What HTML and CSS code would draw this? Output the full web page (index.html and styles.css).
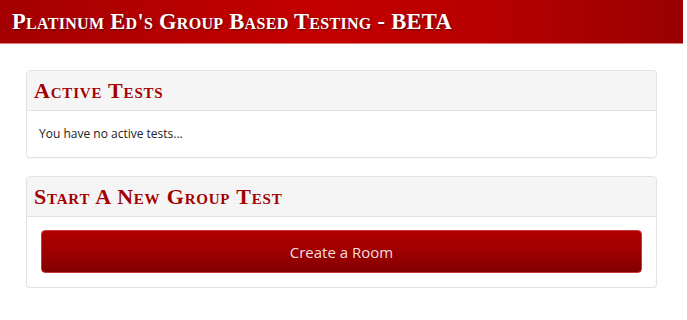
FILE: index.html
```html
<!DOCTYPE html>
<html lang="en">
<head>
    <meta charset="UTF-8">
    <title>Group Based Testing</title>
    <link rel="stylesheet" href="styles.css">
</head>
<body>
<div class="page">
    <header class="top-bar">
        <h1 class="brand">Platinum Ed's Group Based Testing - BETA</h1>
    </header>

    <main class="content">
        <section class="panel">
            <div class="panel-heading">
                <h2 class="panel-title">Active Tests</h2>
            </div>
            <div class="panel-body">
                <p class="empty-note">You have no active tests...</p>
            </div>
        </section>

        <section class="panel">
            <div class="panel-heading">
                <h2 class="panel-title">Start A New Group Test</h2>
            </div>
            <div class="panel-body panel-body-btn">
                <button class="btn-room" type="button">Create a Room</button>
            </div>
        </section>
    </main>
</div>
</body>
</html>
```

FILE: styles.css
```css
html, body {
    margin: 0;
    padding: 0;
    background: #fff;
}
.page {
    width: 683px;
    font-family: "Open Sans", "Liberation Sans", sans-serif;
}
.top-bar {
    height: 43px;
    border-bottom: 1px solid #e47a7a;
    background: linear-gradient(to right, #a40000 0%, #c40000 45%, #b80000 70%, #990000 100%);
    display: flex;
    align-items: center;
    padding: 0 12px;
}
.brand {
    margin: 0;
    font-family: "Liberation Serif", "DejaVu Serif", serif;
    font-variant: small-caps;
    font-weight: bold;
    font-size: 22.5px;
    letter-spacing: 0.3px;
    color: #fff;
    text-shadow: 1px 1px 2px rgba(60, 0, 0, 0.7);
    white-space: nowrap;
}
.content {
    padding: 26px 26px 0;
    display: flex;
    flex-direction: column;
    gap: 18px;
}
.panel {
    border: 1px solid #e2e2e2;
    border-radius: 4px;
    background: #fff;
    box-shadow: 0 1px 1px rgba(0, 0, 0, 0.05);
}
.panel-heading {
    background: #f5f5f5;
    border-bottom: 1px solid #e2e2e2;
    border-radius: 3px 3px 0 0;
    height: 39px;
    display: flex;
    align-items: center;
    padding: 0 7px;
}
.panel-title {
    margin: 0;
    font-family: "Liberation Serif", "DejaVu Serif", serif;
    font-variant: small-caps;
    font-weight: bold;
    font-size: 22px;
    letter-spacing: 0.8px;
    color: #a30000;
}
.panel-body {
    padding: 14px 12px 15px;
}
.empty-note {
    margin: 0;
    font-size: 12px;
    line-height: 17px;
    color: #222;
}
.panel-body-btn {
    padding: 13px 14px 14px;
}
.btn-room {
    display: block;
    width: 100%;
    height: 43px;
    border: 1px solid #c83a3a;
    border-radius: 4px;
    background: linear-gradient(to bottom, #b00000 0%, #9c0000 55%, #820000 100%);
    color: #f4dede;
    font-family: "Open Sans", "Liberation Sans", sans-serif;
    font-size: 15px;
    cursor: pointer;
}
```
